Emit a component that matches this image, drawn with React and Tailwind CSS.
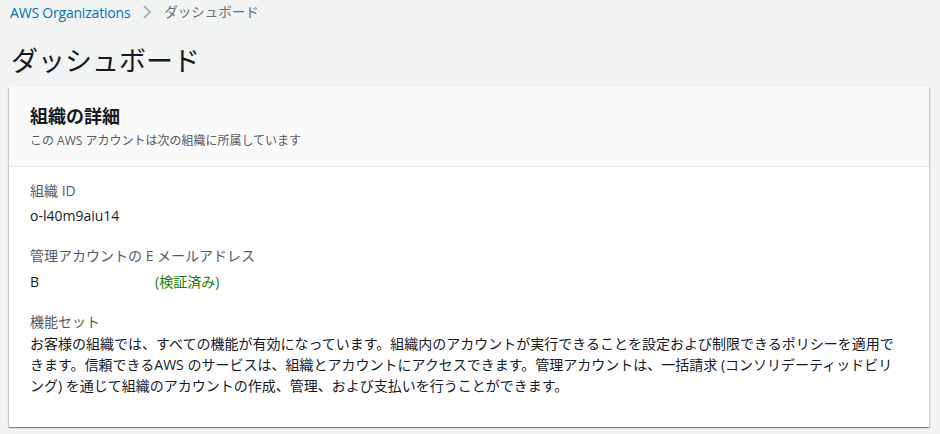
import React from 'react'

function Chevron() {
  return (
    <svg width="12" height="16" viewBox="0 0 12 16" className="mx-[11px]">
      <path d="M3 2 L9 8 L3 14" fill="none" stroke="#aab7b8" strokeWidth="2" />
    </svg>
  )
}

export default function App() {
  return (
    <div
      className="min-h-[434px] w-[940px] bg-[#f2f3f3] text-[#16191f]"
      style={{ fontFamily: '"Open Sans", "Noto Sans CJK JP", sans-serif' }}
    >
      {/* breadcrumb */}
      <nav className="flex items-center h-[24px] pl-[10px] text-[14px]">
        <span className="text-[#0073bb] tracking-[-0.2px]">AWS Organizations</span>
        <Chevron />
        <span className="text-[#687078] text-[13.5px]">ダッシュボード</span>
      </nav>

      <h1 className="pl-[11px] pt-[17px] h-[63px] text-[27px] leading-[40px] font-normal">
        ダッシュボード
      </h1>

      <div className="ml-[9px] w-[920px] bg-white shadow-[0_1px_1px_0_rgba(0,28,36,0.3),1px_1px_1px_0_rgba(0,28,36,0.15),-1px_1px_1px_0_rgba(0,28,36,0.15)]">
        <div className="bg-[#fafafa] border-b border-[#eaeded] h-[80px] pl-[21px] pt-[16px]">
          <h2 className="text-[18px] font-bold leading-[26px]">組織の詳細</h2>
          <p className="text-[12px] leading-[18px] text-[#545b64] mt-[3px]">
            この AWS アカウントは次の組織に所属しています
          </p>
        </div>

        <div className="pl-[21px] pr-[28px] pt-[13px] pb-[31px] text-[14px]">
          <div className="leading-[22px] text-[#545b64]">組織 ID</div>
          <div className="leading-[22px] mt-[3px]">o-l40m9aiu14</div>

          <div className="leading-[22px] text-[#545b64] mt-[18px]">管理アカウントの E メールアドレス</div>
          <div className="leading-[22px] mt-[4px] flex">
            <span className="w-[125px]">B</span>
            <span className="text-[#1d8102]">(検証済み)</span>
          </div>

          <div className="leading-[22px] text-[#545b64] mt-[18px]">機能セット</div>
          <p className="leading-[21px]">
            お客様の組織では、すべての機能が有効になっています。組織内のアカウントが実行できることを設定および制限できるポリシーを適用できます。信頼できるAWS のサービスは、組織とアカウントにアクセスできます。管理アカウントは、一括請求 (コンソリデーティッドビリング) を通じて組織のアカウントの作成、管理、および支払いを行うことができます。
          </p>
        </div>
      </div>
    </div>
  )
}
